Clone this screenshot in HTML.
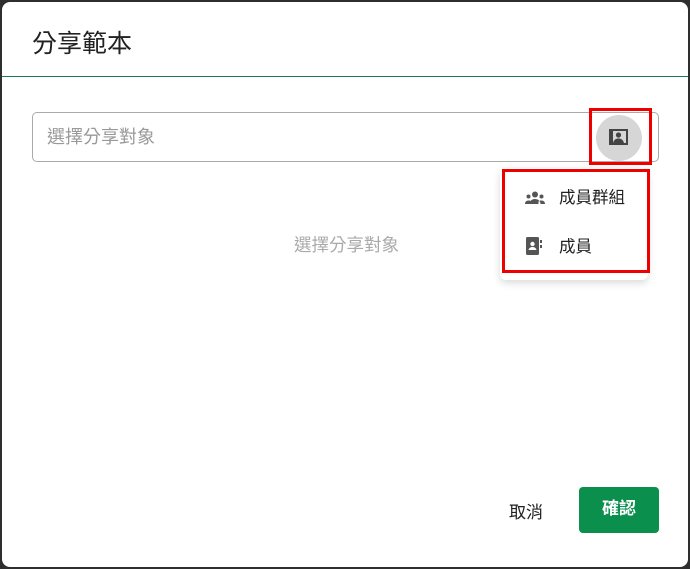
<!DOCTYPE html>
<html><head><meta charset="utf-8"><style>
*{margin:0;padding:0;box-sizing:border-box}
body{width:690px;height:569px;background:#2e2e2e;font-family:"Liberation Sans","Noto Sans CJK TC",sans-serif;position:relative;overflow:hidden}
.dlg{position:absolute;left:2px;top:2px;width:686px;height:565px;background:#fff;border-radius:8px}
.t{position:absolute;left:30px;top:22px;font-size:25px;color:#222}
.line{position:absolute;left:0;top:74px;width:686px;height:1px;background:#1e7a55}
.inp{position:absolute;left:30px;top:110px;width:627px;height:50px;border:1px solid #aaa;border-radius:5px}
.ph{position:absolute;left:14px;top:10px;font-size:18px;color:#999}
.circ{position:absolute;left:596px;top:115px;width:46px;height:46px;border-radius:50%;background:#d6d6d6}
.r1{position:absolute;left:589px;top:108px;width:63px;height:57px;border:3px solid #e00}
.menu{position:absolute;left:500px;top:168px;width:148px;height:112px;background:#fff;border-radius:6px;box-shadow:0 3px 8px rgba(0,0,0,.15)}
.r2{position:absolute;left:502px;top:169px;width:148px;height:104px;border:3px solid #e00}
.mi{position:absolute;left:559px;font-size:16.5px;color:#222}
.empty{position:absolute;left:292px;top:230px;font-size:17.5px;color:#aaa}
.cancel{position:absolute;left:507px;top:496px;font-size:17px;color:#222}
.ok{position:absolute;left:577px;top:485px;width:80px;height:46px;background:#0b8f4c;border-radius:4px;color:#fff;font-size:17px;font-weight:bold;text-align:center;line-height:44px}
</style></head><body>
<div class="dlg">
<div class="t">分享範本</div>
<div class="line"></div>
<div class="inp"><div class="ph">選擇分享對象</div></div>
<div class="empty">選擇分享對象</div>
<div class="cancel">取消</div>
<div class="ok">確認</div>
</div>
<div class="circ"><svg width="46" height="46" viewBox="0 0 46 46"><rect x="14" y="15" width="17" height="14" fill="none" stroke="#444" stroke-width="2"/><rect x="14" y="15" width="3" height="14" fill="#444"/><circle cx="22.5" cy="20" r="2.6" fill="#444"/><path d="M17 28c1-3.5 3-4.5 5.5-4.5s4.5 1 5.5 4.5z" fill="#444"/></svg></div>
<div class="r1"></div>
<div class="menu"></div>
<svg style="position:absolute;left:524px;top:190px" width="22" height="16" viewBox="0 0 22 16"><circle cx="11" cy="4.5" r="3" fill="#555"/><circle cx="4.5" cy="6.5" r="2" fill="#555"/><circle cx="17.5" cy="6.5" r="2" fill="#555"/><path d="M5.5 14c0-3 2.5-5 5.5-5s5.5 2 5.5 5z M1 14c0-2 1.2-3.5 3.5-3.5s3 1 3 1.5v2z M21 14c0-2-1.2-3.5-3.5-3.5s-3 1-3 1.5v2z" fill="#555"/></svg>
<svg style="position:absolute;left:526px;top:237px" width="16" height="18" viewBox="0 0 16 18"><rect x="0" y="0" width="13" height="18" rx="1.5" fill="#555"/><rect x="14" y="3" width="2" height="3" fill="#555"/><rect x="14" y="8" width="2" height="3" fill="#555"/><circle cx="6.5" cy="7" r="2.2" fill="#fff"/><path d="M2.5 13c.5-2 2-3 4-3s3.5 1 4 3z" fill="#fff"/></svg>
<div class="mi" style="top:184px">成員群組</div>
<div class="mi" style="top:233px">成員</div>
<div class="r2"></div>
</body></html>
